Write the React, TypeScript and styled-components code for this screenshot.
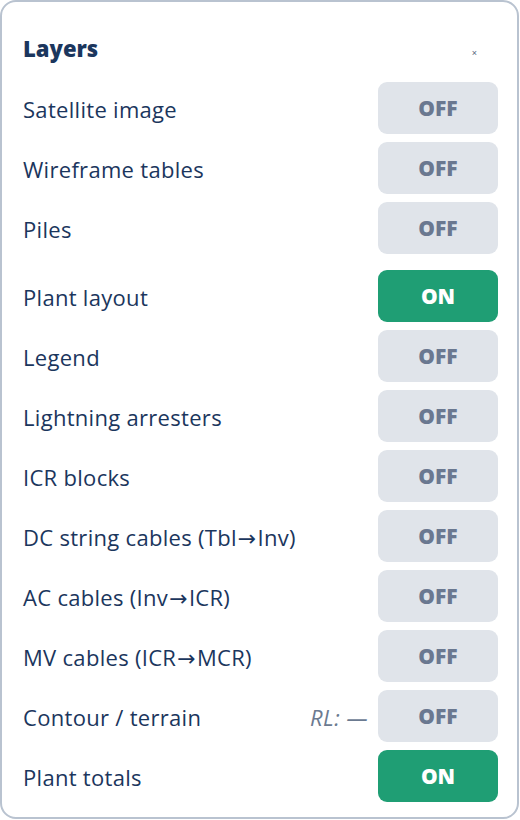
import styled, { createGlobalStyle } from 'styled-components';

const GlobalStyle = createGlobalStyle`
  html, body {
    margin: 0;
    padding: 0;
    background: #ffffff;
  }
  body {
    font-family: 'Open Sans', 'Noto Sans', sans-serif;
  }
`;

const Panel = styled.div`
  box-sizing: border-box;
  width: 519px;
  height: 819px;
  border: 2px solid #b9c3d0;
  border-radius: 16px;
  background: #ffffff;
  padding: 24px 19px 0 21px;
  overflow: hidden;
`;

const Header = styled.div`
  display: flex;
  align-items: center;
  justify-content: space-between;
  height: 44px;
  margin-bottom: 12px;
`;

const Title = styled.h2`
  margin: 0;
  font-size: 22px;
  font-weight: 800;
  color: #1b365d;
`;

const Close = styled.button`
  border: none;
  background: none;
  padding: 0;
  margin: 10px 21px 0 0;
  font-size: 9px;
  line-height: 1;
  color: #55667d;
  cursor: pointer;
`;

const List = styled.div`
  display: flex;
  flex-direction: column;
  gap: 8px;
`;

const Row = styled.div<{ $gapBefore?: boolean }>`
  display: flex;
  align-items: center;
  justify-content: space-between;
  height: 52px;
  margin-top: ${(p) => (p.$gapBefore ? '8px' : '0')};
`;

const Label = styled.span`
  font-size: 22px;
  letter-spacing: 0.3px;
  color: #1b365d;
  padding-top: 2px;
`;

const Arrow = styled.span`
  font-family: 'DejaVu Sans', sans-serif;
  font-size: 22px;
  margin: 0 1px;
`;

const Right = styled.div`
  display: flex;
  align-items: center;
  gap: 10px;
`;

const Note = styled.span`
  font-size: 22px;
  letter-spacing: 0.5px;
  font-style: italic;
  color: #6b7a90;
  padding-top: 2px;
`;

const Toggle = styled.button<{ $on: boolean }>`
  width: 120px;
  height: 52px;
  border: none;
  border-radius: 9px;
  background: ${(p) => (p.$on ? '#1f9e74' : '#e0e4ea')};
  color: ${(p) => (p.$on ? '#ffffff' : '#6a7890')};
  font-family: 'Open Sans', 'Noto Sans', sans-serif;
  font-size: 21px;
  font-weight: 800;
  cursor: pointer;
`;

type Layer = { name: string; on: boolean; note?: string; gapBefore?: boolean };

const layers: Layer[] = [
  { name: 'Satellite image', on: false },
  { name: 'Wireframe tables', on: false },
  { name: 'Piles', on: false },
  { name: 'Plant layout', on: true, gapBefore: true },
  { name: 'Legend', on: false },
  { name: 'Lightning arresters', on: false },
  { name: 'ICR blocks', on: false },
  { name: 'DC string cables (Tbl→Inv)', on: false },
  { name: 'AC cables (Inv→ICR)', on: false },
  { name: 'MV cables (ICR→MCR)', on: false },
  { name: 'Contour / terrain', on: false, note: 'RL: —' },
  { name: 'Plant totals', on: true },
];

function renderName(name: string) {
  const parts = name.split('→');
  return parts.map((p, i) => (
    <span key={i}>
      {i > 0 && <Arrow>→</Arrow>}
      {p}
    </span>
  ));
}

export default function App() {
  return (
    <>
      <GlobalStyle />
      <Panel>
        <Header>
          <Title>Layers</Title>
          <Close aria-label="Close">×</Close>
        </Header>
        <List>
          {layers.map((l) => (
            <Row key={l.name} $gapBefore={l.gapBefore}>
              <Label>{renderName(l.name)}</Label>
              <Right>
                {l.note && <Note>{l.note}</Note>}
                <Toggle $on={l.on}>{l.on ? 'ON' : 'OFF'}</Toggle>
              </Right>
            </Row>
          ))}
        </List>
      </Panel>
    </>
  );
}
